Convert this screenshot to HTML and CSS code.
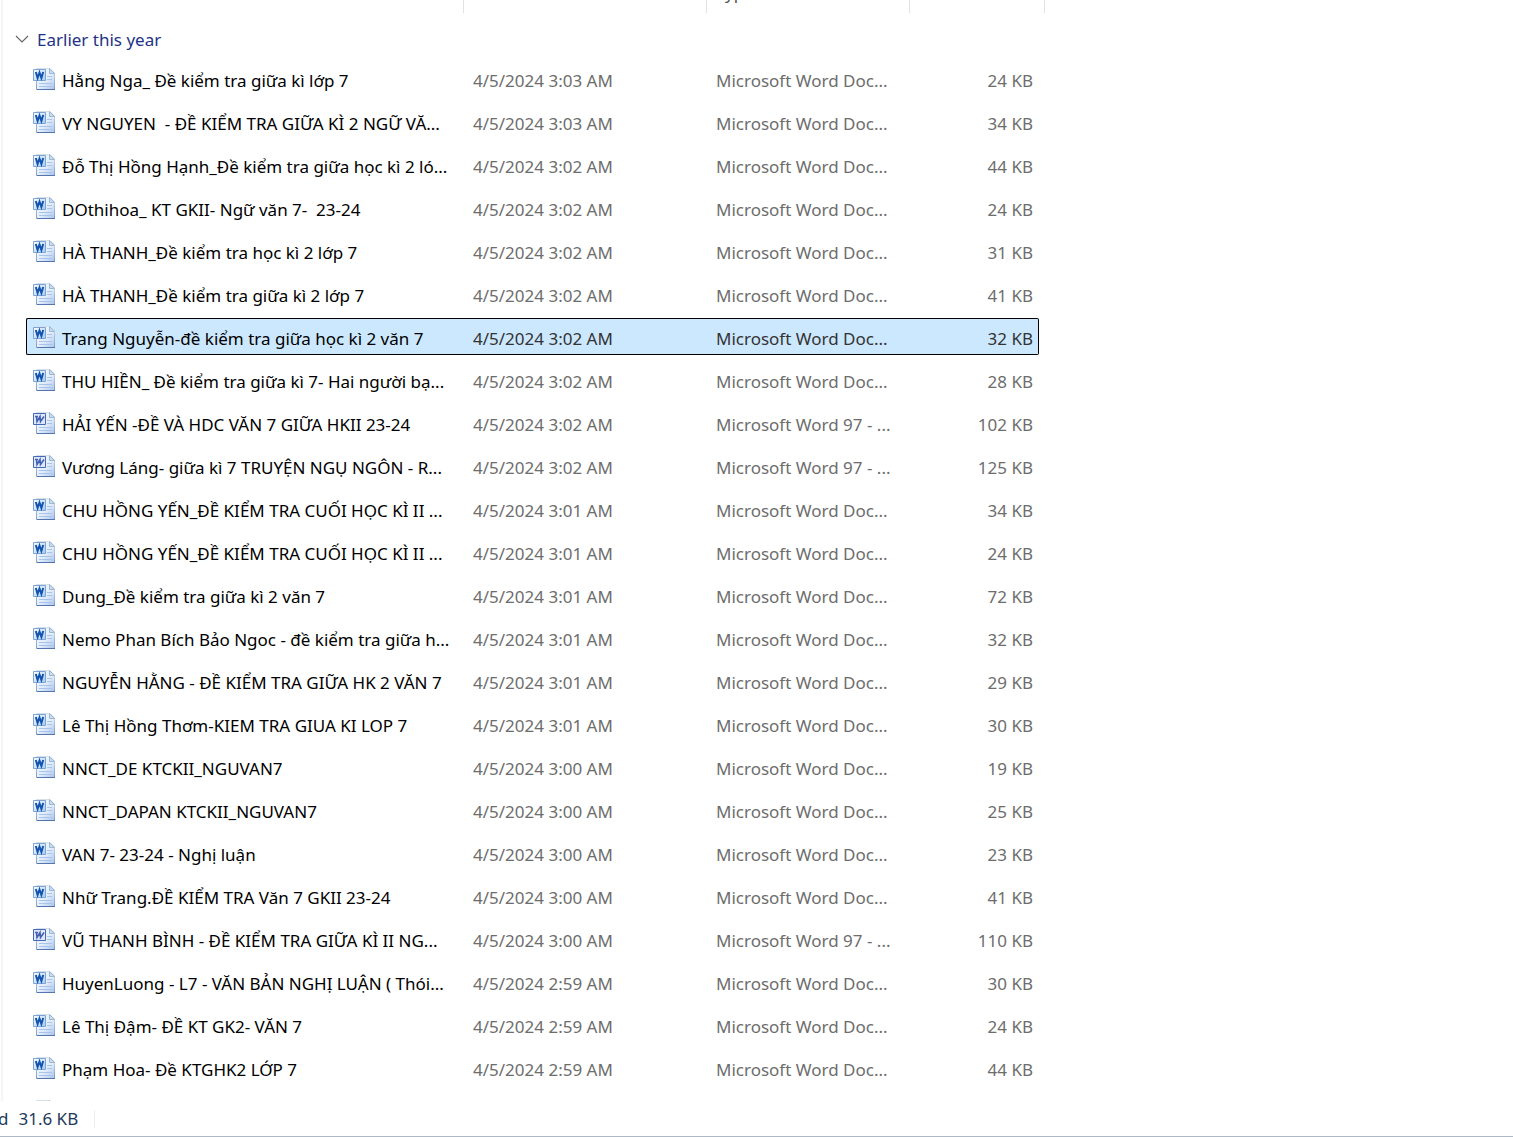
FILE: index.html
```html
<!DOCTYPE html>
<html lang="vi">
<head>
<meta charset="utf-8">
<title>Documents</title>
<link rel="stylesheet" href="styles.css">
</head>
<body>
<svg class="symbols" aria-hidden="true">
  <defs>
    <linearGradient id="paper" x1="0" y1="0" x2="1" y2="1">
      <stop offset="0" stop-color="#f4f9ff"/><stop offset="0.55" stop-color="#e4eefb"/><stop offset="1" stop-color="#a9c3ec"/>
    </linearGradient>
    <linearGradient id="edge" x1="0" y1="0" x2="0" y2="1">
      <stop offset="0" stop-color="#d5e0ec"/><stop offset="1" stop-color="#7f9cca"/>
    </linearGradient>
    <linearGradient id="badge" x1="0" y1="0" x2="1" y2="1">
      <stop offset="0" stop-color="#ffffff"/><stop offset="1" stop-color="#9ccdf7"/>
    </linearGradient>
    <symbol id="sheet" viewBox="0 0 23 23">
      <path d="M3.500 .5H17L21.500 5V21.500H3.500Z" fill="url(#paper)" stroke="url(#edge)"/>
      <path d="M16.500 .5V5.500H21.500Z" fill="#c8dcf0" stroke="#9fb8d2"/>
      <path d="M14 8.500H19M14 11.500H19M6 15.500H19M6 18.500H19" stroke="#a9c4ea" fill="none"/>
      <path d="M4 21.500H22" stroke="#5575ae"/>
    </symbol>
    <symbol id="docx" viewBox="0 0 23 23">
      <use href="#sheet" width="23" height="23"/>
      <path d="M.5 1.500H12.500V12.500H.5Z" fill="url(#badge)" stroke="#7fa3d2"/>
      <path d="M2.800 4L4.600 10L6.500 4.500L8.400 10L10.200 4" fill="none" stroke="#1553ae" stroke-width="2"/>
    </symbol>
    <symbol id="doc" viewBox="0 0 23 23">
      <use href="#sheet" width="23" height="23"/>
      <path d="M.5 1.500H12.500V12.500H.5Z" fill="#dfe8fa" stroke="#4568b8"/>
      <path d="M2 4.500H5M3.500 4.500L4 9.500L7 4.500L7.500 9.500L11 4.500" fill="none" stroke="#4362b3" stroke-width="1.600"/>
    </symbol>
  </defs>
</svg>
<main class="list">
<table class="files">
<colgroup><col class="col-name"><col class="col-date"><col class="col-type"><col class="col-size"><col class="col-end"></colgroup>
<thead><tr><th>Name</th><th>Date modified</th><th>Type</th><th colspan="2">Size</th></tr></thead>
<tbody>
<tr class="group"><th colspan="5"><button class="toggle" type="button"><svg class="chevron" viewBox="0 0 14 10"><path d="M1 1L7 7L13 1" fill="none" stroke="#666" stroke-width="1.200"/></svg>Earlier this year</button></th></tr>
<tr><td><svg class="icon"><use href="#docx"/></svg>Hằng Nga_ Đề kiểm tra giữa kì lớp 7</td><td>4/5/2024 3:03 AM</td><td>Microsoft Word Doc...</td><td>24 KB</td></tr>
<tr><td><svg class="icon"><use href="#docx"/></svg>VY NGUYEN  - ĐỀ KIỂM TRA GIỮA KÌ 2 NGỮ VĂ...</td><td>4/5/2024 3:03 AM</td><td>Microsoft Word Doc...</td><td>34 KB</td></tr>
<tr><td><svg class="icon"><use href="#docx"/></svg>Đỗ Thị Hồng Hạnh_Đề kiểm tra giữa học kì 2 ló...</td><td>4/5/2024 3:02 AM</td><td>Microsoft Word Doc...</td><td>44 KB</td></tr>
<tr><td><svg class="icon"><use href="#docx"/></svg>DOthihoa_ KT GKII- Ngữ văn 7-  23-24</td><td>4/5/2024 3:02 AM</td><td>Microsoft Word Doc...</td><td>24 KB</td></tr>
<tr><td><svg class="icon"><use href="#docx"/></svg>HÀ THANH_Đề kiểm tra học kì 2 lớp 7</td><td>4/5/2024 3:02 AM</td><td>Microsoft Word Doc...</td><td>31 KB</td></tr>
<tr><td><svg class="icon"><use href="#docx"/></svg>HÀ THANH_Đề kiểm tra giữa kì 2 lớp 7</td><td>4/5/2024 3:02 AM</td><td>Microsoft Word Doc...</td><td>41 KB</td></tr>
<tr class="selected"><td><svg class="icon"><use href="#docx"/></svg>Trang Nguyễn-đề kiểm tra giữa học kì 2 văn 7</td><td>4/5/2024 3:02 AM</td><td>Microsoft Word Doc...</td><td>32 KB</td></tr>
<tr><td><svg class="icon"><use href="#docx"/></svg>THU HIỀN_ Đề kiểm tra giữa kì 7- Hai người bạ...</td><td>4/5/2024 3:02 AM</td><td>Microsoft Word Doc...</td><td>28 KB</td></tr>
<tr><td><svg class="icon"><use href="#doc"/></svg>HẢI YẾN -ĐỀ VÀ HDC VĂN 7 GIỮA HKII 23-24</td><td>4/5/2024 3:02 AM</td><td>Microsoft Word 97 - ...</td><td>102 KB</td></tr>
<tr><td><svg class="icon"><use href="#doc"/></svg>Vương Láng- giữa kì 7 TRUYỆN NGỤ NGÔN - R...</td><td>4/5/2024 3:02 AM</td><td>Microsoft Word 97 - ...</td><td>125 KB</td></tr>
<tr><td><svg class="icon"><use href="#docx"/></svg>CHU HỒNG YẾN_ĐỀ KIỂM TRA CUỐI HỌC KÌ II ...</td><td>4/5/2024 3:01 AM</td><td>Microsoft Word Doc...</td><td>34 KB</td></tr>
<tr><td><svg class="icon"><use href="#docx"/></svg>CHU HỒNG YẾN_ĐỀ KIỂM TRA CUỐI HỌC KÌ II ...</td><td>4/5/2024 3:01 AM</td><td>Microsoft Word Doc...</td><td>24 KB</td></tr>
<tr><td><svg class="icon"><use href="#docx"/></svg>Dung_Đề kiểm tra giữa kì 2 văn 7</td><td>4/5/2024 3:01 AM</td><td>Microsoft Word Doc...</td><td>72 KB</td></tr>
<tr><td><svg class="icon"><use href="#docx"/></svg>Nemo Phan Bích Bảo Ngoc - đề kiểm tra giữa h...</td><td>4/5/2024 3:01 AM</td><td>Microsoft Word Doc...</td><td>32 KB</td></tr>
<tr><td><svg class="icon"><use href="#docx"/></svg>NGUYỄN HẰNG - ĐỀ KIỂM TRA GIỮA HK 2 VĂN 7</td><td>4/5/2024 3:01 AM</td><td>Microsoft Word Doc...</td><td>29 KB</td></tr>
<tr><td><svg class="icon"><use href="#docx"/></svg>Lê Thị Hồng Thơm-KIEM TRA GIUA KI LOP 7</td><td>4/5/2024 3:01 AM</td><td>Microsoft Word Doc...</td><td>30 KB</td></tr>
<tr><td><svg class="icon"><use href="#docx"/></svg>NNCT_DE KTCKII_NGUVAN7</td><td>4/5/2024 3:00 AM</td><td>Microsoft Word Doc...</td><td>19 KB</td></tr>
<tr><td><svg class="icon"><use href="#docx"/></svg>NNCT_DAPAN KTCKII_NGUVAN7</td><td>4/5/2024 3:00 AM</td><td>Microsoft Word Doc...</td><td>25 KB</td></tr>
<tr><td><svg class="icon"><use href="#docx"/></svg>VAN 7- 23-24 - Nghị luận</td><td>4/5/2024 3:00 AM</td><td>Microsoft Word Doc...</td><td>23 KB</td></tr>
<tr><td><svg class="icon"><use href="#docx"/></svg>Nhữ Trang.ĐỀ KIỂM TRA Văn 7 GKII 23-24</td><td>4/5/2024 3:00 AM</td><td>Microsoft Word Doc...</td><td>41 KB</td></tr>
<tr><td><svg class="icon"><use href="#doc"/></svg>VŨ THANH BÌNH - ĐỀ KIỂM TRA GIỮA KÌ II NG...</td><td>4/5/2024 3:00 AM</td><td>Microsoft Word 97 - ...</td><td>110 KB</td></tr>
<tr><td><svg class="icon"><use href="#docx"/></svg>HuyenLuong - L7 - VĂN BẢN NGHỊ LUẬN ( Thói...</td><td>4/5/2024 2:59 AM</td><td>Microsoft Word Doc...</td><td>30 KB</td></tr>
<tr><td><svg class="icon"><use href="#docx"/></svg>Lê Thị Đậm- ĐỀ KT GK2- VĂN 7</td><td>4/5/2024 2:59 AM</td><td>Microsoft Word Doc...</td><td>24 KB</td></tr>
<tr><td><svg class="icon"><use href="#docx"/></svg>Phạm Hoa- Đề KTGHK2 LỚP 7</td><td>4/5/2024 2:59 AM</td><td>Microsoft Word Doc...</td><td>44 KB</td></tr>
<tr><td><svg class="icon"><use href="#docx"/></svg></td><td></td><td></td><td></td></tr>
</tbody>
</table>
</main>
<footer class="status"><span>d</span><span class="total">31.6 KB</span></footer>
</body>
</html>
```
FILE: styles.css
```css
* { box-sizing: border-box; }

body {
  margin: 0;
  height: 100vh;
  display: grid;
  grid-template-rows: minmax(0, 1fr) 36px;
  background: #fff;
  color: #000;
  font: 17px/24px "Segoe UI", "Noto Sans", "Open Sans", sans-serif;
}

.symbols { position: absolute; width: 0; height: 0; }

.list {
  overflow: hidden;
  margin-left: 1px;
  border-left: 2px solid #f5f5f5;
  padding-left: 23px;
}

/* The column header is scrolled most of the way out of view. */
.files {
  margin-top: -30px;
  width: 1019px;
  table-layout: fixed;
  border-collapse: separate;
  border-spacing: 0 6px;
}

.col-name { width: 438px; }
.col-date { width: 243px; }
.col-type { width: 203px; }
.col-size { width: 129px; }
.col-end { width: 6px; }

th { font-weight: 400; text-align: left; padding: 0; }
thead th {
  height: 37px;
  padding: 0 0 4px 9px;
  border-right: 1px solid #e2e2e2;
  color: #555;
}

.group th { height: 35px; padding-top: 6px; }
.toggle {
  display: flex;
  align-items: center;
  gap: 8px;
  margin-left: -11px;
  padding: 0;
  border: 0;
  background: none;
  color: #1e3287;
  font: inherit;
}
.chevron { width: 14px; height: 10px; }

td {
  height: 37px;
  padding: 4px 0 0 9px;
  border: 0 solid #000;
  color: #6d6d6d;
  white-space: pre;
}
td:first-child { padding-left: 7px; color: #000; }
td:nth-child(4) { padding-right: 6px; text-align: right; }

.icon {
  width: 23px;
  height: 23px;
  margin-right: 6px;
  vertical-align: -4px;
}

.selected td { border-width: 1px 0; padding-top: 4px; background: #cce8ff; color: #333; }
.selected td:first-child { border-left-width: 1px; padding-left: 6px; border-radius: 2px 0 0 2px; color: #000; }
.selected td:nth-child(4) { border-right-width: 1px; padding-right: 5px; border-radius: 0 2px 2px 0; }

.status {
  display: flex;
  align-items: center;
  gap: 10px;
  margin-left: -2px;
  border-bottom: 1px solid #aeb8c4;
  color: #1e395b;
}
.total { padding-right: 16px; border-right: 1px solid #eee; line-height: 18px; }
```
